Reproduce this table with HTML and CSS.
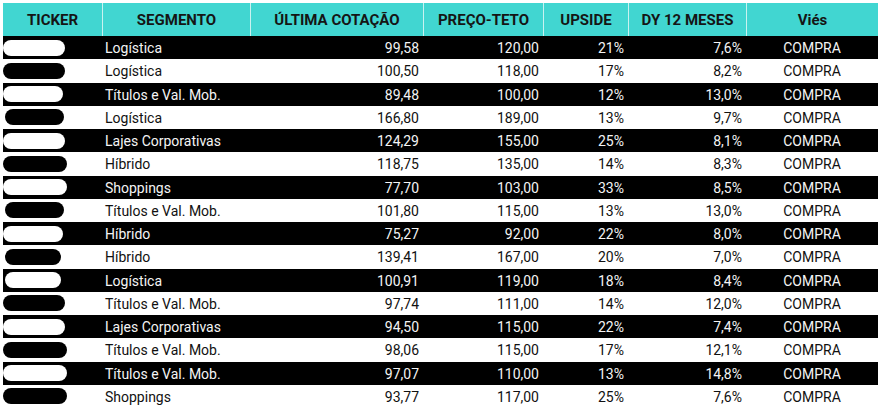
FILE: index.html
```html
<!DOCTYPE html>
<html lang="pt-BR">
<head>
<meta charset="utf-8">
<title>FIIs</title>
<link rel="stylesheet" href="styles.css">
</head>
<body>
<div class="table">
  <div class="row head">
    <div class="c">TICKER</div>
    <div class="c">SEGMENTO</div>
    <div class="c">ÚLTIMA COTAÇÃO</div>
    <div class="c">PREÇO-TETO</div>
    <div class="c">UPSIDE</div>
    <div class="c">DY 12 MESES</div>
    <div class="c">Viés</div>
  </div>
  <div class="row dark"><div class="t"><span class="pill pa"></span></div><div class="s">Logística</div><div class="n">99,58</div><div class="n">120,00</div><div class="n">21%</div><div class="n">7,6%</div><div class="v">COMPRA</div></div>
  <div class="row light"><div class="t"><span class="pill pa"></span></div><div class="s">Logística</div><div class="n">100,50</div><div class="n">118,00</div><div class="n">17%</div><div class="n">8,2%</div><div class="v">COMPRA</div></div>
  <div class="row dark"><div class="t"><span class="pill pc"></span></div><div class="s">Títulos e Val. Mob.</div><div class="n">89,48</div><div class="n">100,00</div><div class="n">12%</div><div class="n">13,0%</div><div class="v">COMPRA</div></div>
  <div class="row light"><div class="t"><span class="pill pd"></span></div><div class="s">Logística</div><div class="n">166,80</div><div class="n">189,00</div><div class="n">13%</div><div class="n">9,7%</div><div class="v">COMPRA</div></div>
  <div class="row dark"><div class="t"><span class="pill pa"></span></div><div class="s">Lajes Corporativas</div><div class="n">124,29</div><div class="n">155,00</div><div class="n">25%</div><div class="n">8,1%</div><div class="v">COMPRA</div></div>
  <div class="row light"><div class="t"><span class="pill pb"></span></div><div class="s">Híbrido</div><div class="n">118,75</div><div class="n">135,00</div><div class="n">14%</div><div class="n">8,3%</div><div class="v">COMPRA</div></div>
  <div class="row dark"><div class="t"><span class="pill pb"></span></div><div class="s">Shoppings</div><div class="n">77,70</div><div class="n">103,00</div><div class="n">33%</div><div class="n">8,5%</div><div class="v">COMPRA</div></div>
  <div class="row light"><div class="t"><span class="pill pd"></span></div><div class="s">Títulos e Val. Mob.</div><div class="n">101,80</div><div class="n">115,00</div><div class="n">13%</div><div class="n">13,0%</div><div class="v">COMPRA</div></div>
  <div class="row dark"><div class="t"><span class="pill pc"></span></div><div class="s">Híbrido</div><div class="n">75,27</div><div class="n">92,00</div><div class="n">22%</div><div class="n">8,0%</div><div class="v">COMPRA</div></div>
  <div class="row light"><div class="t"><span class="pill pe"></span></div><div class="s">Híbrido</div><div class="n">139,41</div><div class="n">167,00</div><div class="n">20%</div><div class="n">7,0%</div><div class="v">COMPRA</div></div>
  <div class="row dark"><div class="t"><span class="pill pe"></span></div><div class="s">Logística</div><div class="n">100,91</div><div class="n">119,00</div><div class="n">18%</div><div class="n">8,4%</div><div class="v">COMPRA</div></div>
  <div class="row light"><div class="t"><span class="pill pa"></span></div><div class="s">Títulos e Val. Mob.</div><div class="n">97,74</div><div class="n">111,00</div><div class="n">14%</div><div class="n">12,0%</div><div class="v">COMPRA</div></div>
  <div class="row dark"><div class="t"><span class="pill pa"></span></div><div class="s">Lajes Corporativas</div><div class="n">94,50</div><div class="n">115,00</div><div class="n">22%</div><div class="n">7,4%</div><div class="v">COMPRA</div></div>
  <div class="row light"><div class="t"><span class="pill pb"></span></div><div class="s">Títulos e Val. Mob.</div><div class="n">98,06</div><div class="n">115,00</div><div class="n">17%</div><div class="n">12,1%</div><div class="v">COMPRA</div></div>
  <div class="row dark"><div class="t"><span class="pill pb"></span></div><div class="s">Títulos e Val. Mob.</div><div class="n">97,07</div><div class="n">110,00</div><div class="n">13%</div><div class="n">14,8%</div><div class="v">COMPRA</div></div>
  <div class="row light"><div class="t"><span class="pill pb"></span></div><div class="s">Shoppings</div><div class="n">93,77</div><div class="n">117,00</div><div class="n">25%</div><div class="n">7,6%</div><div class="v">COMPRA</div></div>
</div>
</body>
</html>
```
FILE: styles.css
```css
html, body {
  margin: 0;
  padding: 0;
  background: #ffffff;
}
body {
  font-family: Roboto, "Liberation Sans", sans-serif;
  font-size: 14px;
  color: #111111;
}
.table {
  padding: 3px 0 0 3px;
  display: flex;
  flex-direction: column;
}
.row {
  display: grid;
  grid-template-columns: 99px 148px 173px 120px 85px 118px 132px;
  height: 23.25px;
  align-items: center;
}
.row > div {
  height: 100%;
  display: flex;
  align-items: center;
  white-space: nowrap;
  box-sizing: border-box;
}
.dark > div, .light > div {
  padding-top: 1px;
}
.head {
  height: 33px;
  background: #41d6d1;
  font-weight: 700;
  font-size: 15px;
  color: #151515;
}
.head .c {
  justify-content: center;
  border-left: 1px solid #c9f2f0;
  padding-top: 1px;
}
.head .c:first-child {
  border-left: none;
}
.dark {
  background: #000000;
  color: #f4f4f4;
}
.light {
  background: #ffffff;
  color: #111111;
}
.row > .s {
  padding-left: 3px;
}
.row > .n {
  justify-content: flex-end;
  padding-right: 4px;
}
.v {
  justify-content: center;
}
.row > .t {
  padding-top: 0;
}
.pill {
  display: block;
  height: 16px;
  border-radius: 8px;
}
.dark .pill { background: #ffffff; }
.light .pill { background: #000000; }
.pa { width: 62px; }
.pb { width: 64px; }
.pc { width: 60px; }
.pd { width: 59px; margin-left: 2px; }
.pe { width: 56px; margin-left: 2px; }
```
